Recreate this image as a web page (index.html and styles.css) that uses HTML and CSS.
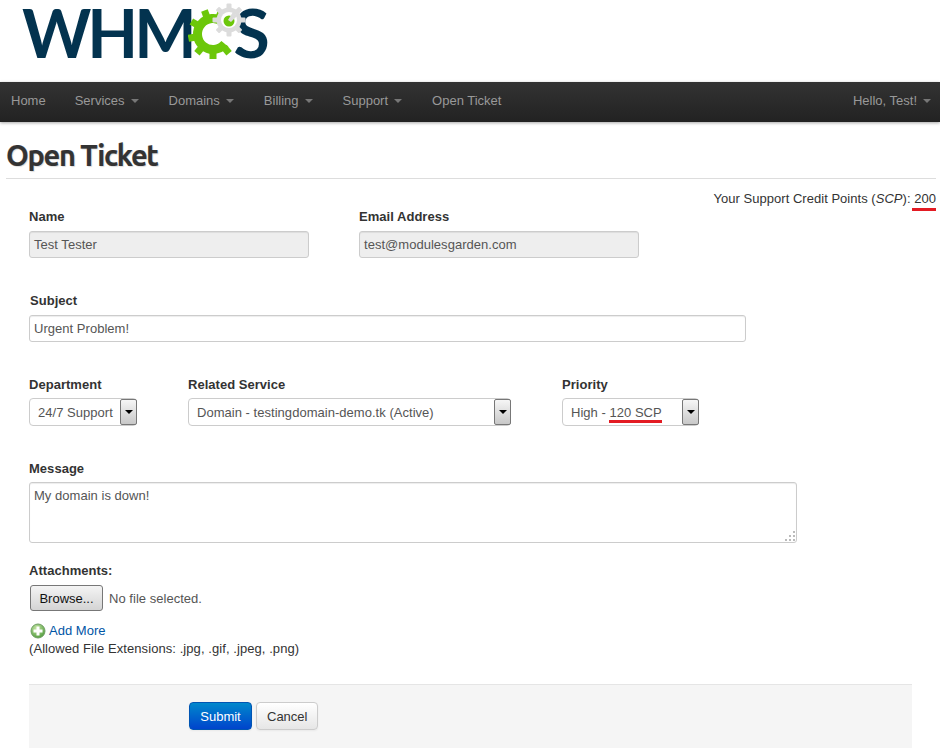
FILE: index.html
```html
<!DOCTYPE html>
<html lang="en">
<head>
<meta charset="utf-8">
<title>Open Ticket</title>
<link rel="stylesheet" href="styles.css">
</head>
<body>
<header class="brand">
  <div class="logo">
    <span class="logo-text">WHM</span>
    <svg class="gears" width="58" height="58" viewBox="0 0 58 58" aria-hidden="true">
      <g fill="#6cc70a">
        <circle cx="25" cy="32" r="15.500" fill="none" stroke="#6cc70a" stroke-width="9" stroke-dasharray="73 25" transform="rotate(40 25 32)"/>
        <rect x="21.500" y="7" width="7" height="8" transform="rotate(-20 25 32)"/>
        <rect x="21.500" y="7" width="7" height="8" transform="rotate(20 25 32)"/>
        <rect x="21.500" y="7" width="7" height="8" transform="rotate(-60 25 32)"/>
        <rect x="21.500" y="7" width="7" height="8" transform="rotate(-100 25 32)"/>
        <rect x="21.500" y="7" width="7" height="8" transform="rotate(-140 25 32)"/>
        <rect x="21.500" y="7" width="7" height="8" transform="rotate(180 25 32)"/>
        <rect x="21.500" y="7" width="7" height="8" transform="rotate(140 25 32)"/>
      </g>
      <g fill="#dcdcdc">
        <circle cx="41" cy="18" r="12.500"/>
        <rect x="38.500" y="1.500" width="5" height="33" rx="1"/>
        <rect x="38.500" y="1.500" width="5" height="33" rx="1" transform="rotate(45 41 18)"/>
        <rect x="38.500" y="1.500" width="5" height="33" rx="1" transform="rotate(90 41 18)"/>
        <rect x="38.500" y="1.500" width="5" height="33" rx="1" transform="rotate(135 41 18)"/>
      </g>
      <circle cx="41" cy="18" r="8" fill="#fff"/>
      <circle cx="41" cy="19" r="5.500" fill="#6cc70a"/>
      <path d="M40 18l5-8 4 4-6 6z" fill="#dcdcdc"/>
    </svg>
    <span class="logo-text logo-s">S</span>
  </div>
</header>

<nav class="navbar">
  <ul class="nav">
    <li class="nav-item">Home</li>
    <li class="nav-item">Services<i class="caret"></i></li>
    <li class="nav-item">Domains<i class="caret"></i></li>
    <li class="nav-item">Billing<i class="caret"></i></li>
    <li class="nav-item">Support<i class="caret"></i></li>
    <li class="nav-item">Open Ticket</li>
  </ul>
  <div class="nav-item nav-user">Hello, Test!<i class="caret"></i></div>
</nav>

<main class="page">
  <h1 class="title">Open Ticket</h1>
  <p class="credits">Your Support Credit Points (<em>SCP</em>): <span class="mark">200</span></p>

  <form class="form">
    <div class="row row-contact">
      <div class="field field-name">
        <div class="label">Name</div>
        <div class="control control-ro">Test Tester</div>
      </div>
      <div class="field field-name">
        <div class="label">Email Address</div>
        <div class="control control-ro">test@modulesgarden.com</div>
      </div>
    </div>

    <div class="row row-subject">
      <div class="field field-subject">
        <div class="label label-shift">Subject</div>
        <div class="control">Urgent Problem!</div>
      </div>
    </div>

    <div class="row row-selects">
      <div class="field field-dept">
        <div class="label">Department</div>
        <div class="select"><span class="select-value">24/7 Support</span><span class="select-btn"><i class="select-arrow"></i></span></div>
      </div>
      <div class="field field-service">
        <div class="label">Related Service</div>
        <div class="select"><span class="select-value">Domain - testingdomain-demo.tk (Active)</span><span class="select-btn"><i class="select-arrow"></i></span></div>
      </div>
      <div class="field field-priority">
        <div class="label">Priority</div>
        <div class="select"><span class="select-value">High - <span class="mark-2">120 SCP</span></span><span class="select-btn"><i class="select-arrow"></i></span></div>
      </div>
    </div>

    <div class="row row-message">
      <div class="field field-message">
        <div class="label">Message</div>
        <div class="textarea">My domain is down!
          <svg class="grip" width="12" height="12" viewBox="0 0 12 12" aria-hidden="true">
            <g fill="#bbb">
              <rect x="9" y="1" width="2" height="2"/>
              <rect x="5" y="5" width="2" height="2"/><rect x="9" y="5" width="2" height="2"/>
              <rect x="1" y="9" width="2" height="2"/><rect x="5" y="9" width="2" height="2"/><rect x="9" y="9" width="2" height="2"/>
            </g>
          </svg>
        </div>
      </div>
    </div>

    <div class="attachments">
      <div class="label">Attachments:</div>
      <div class="file-row">
        <button type="button" class="browse">Browse...</button>
        <span class="file-status">No file selected.</span>
      </div>
      <div class="add-more">
        <svg class="add-icon" width="16" height="16" viewBox="0 0 16 16" aria-hidden="true">
          <defs>
            <radialGradient id="addG" cx="40%" cy="30%" r="75%"><stop offset="0" stop-color="#c6e6a6"/><stop offset="1" stop-color="#4f9a3a"/></radialGradient>
          </defs>
          <circle cx="8" cy="8" r="7" fill="url(#addG)" stroke="#6f9f63"/>
          <path d="M6.500 3.500h3v3h3v3h-3v3h-3v-3h-3v-3h3z" fill="#fff"/>
        </svg>
        <a class="add-link">Add More</a>
      </div>
      <div class="extensions">(Allowed File Extensions: .jpg, .gif, .jpeg, .png)</div>
    </div>

    <div class="actions">
      <button type="button" class="btn btn-primary">Submit</button>
      <button type="button" class="btn">Cancel</button>
    </div>
  </form>
</main>
</body>
</html>
```
FILE: styles.css
```css
* { box-sizing: border-box; }
html, body { margin: 0; padding: 0; }
body {
  width: 940px;
  height: 748px;
  overflow: hidden;
  background: #fff;
  color: #333;
  font: 13px/20px "Liberation Sans", Arial, sans-serif;
  letter-spacing: .03px;
}

/* logo */
.brand { height: 82px; padding: 0 0 0 22px; }
.logo { display: flex; align-items: flex-start; height: 82px; }
.logo-text {
  font: 700 66px/80px "Lato", sans-serif;
  color: #03334f;
  letter-spacing: -4px;
  margin-top: -7px;
}
.gears { margin: 2px 0 0 -5px; flex: none; z-index: 1; }
.logo-s { margin-left: -12px; letter-spacing: 0; }

/* navbar */
.navbar {
  display: flex;
  justify-content: space-between;
  height: 40px;
  background: linear-gradient(#333, #222);
  box-shadow: 0 1px 3px rgba(0,0,0,.35);
  letter-spacing: 0;
}
.nav { display: flex; list-style: none; margin: 0; padding: 0; }
.nav-item { padding: 9px 15px 11px; color: #999; line-height: 20px; white-space: nowrap; }
.nav > .nav-item:first-child { padding-left: 11px; padding-right: 14px; }
.nav-user { padding-right: 9px; }
.caret {
  display: inline-block;
  width: 0; height: 0;
  margin-left: 6px;
  vertical-align: 2px;
  border: 4px solid transparent;
  border-top-color: #777;
  border-bottom: 0;
}

/* page */
.page { padding: 0 4px 0 6px; }
.title {
  margin: 0;
  height: 57px;
  padding-top: 13px;
  border-bottom: 1px solid #ddd;
  font: 700 29px/40px "Ubuntu", "Open Sans", sans-serif;
  letter-spacing: -1.300px;
  color: #333;
  -webkit-text-stroke: .2px #333;
  text-shadow: 1px 1px 1px #ddd;
}
.credits { margin: 9px 0 0; padding-top: 1px; text-align: right; line-height: 20px; height: 20px; }
.mark { display: inline-block; height: 22px; margin-left: -2px; padding-left: 2px; border-bottom: 3px solid #e31b23; }
.mark-2 { display: inline-block; height: 23px; margin-left: -1px; padding-left: 1px; border-bottom: 3px solid #e31b23; }

.form { padding: 0 0 0 23px; }
.row { display: flex; }
.row-contact { height: 69px; margin-top: -2px; gap: 50px; }
.row-subject { margin-top: 15px; height: 62px; }
.row-selects { margin-top: 22px; height: 62px; }
.row-message { margin-top: 22px; }
.label { font-weight: 700; padding-top: 1px; line-height: 20px; height: 20px; color: #333; }
.label-shift { padding-left: 1px; }

.field-name { width: 280px; }
.field-subject { width: 717px; }
.field-dept { width: 108px; margin-right: 51px; }
.field-service { width: 323px; margin-right: 51px; }
.field-priority { width: 137px; }
.field-message { width: 768px; }

.control {
  height: 27px;
  margin-top: 5px;
  padding: 0 4px;
  line-height: 25px;
  color: #555;
  background: #fff;
  border: 1px solid #ccc;
  border-radius: 3px;
  box-shadow: inset 0 1px 1px rgba(0,0,0,.075);
}
.control-ro { background: #eee; }

.select {
  display: flex;
  justify-content: space-between;
  height: 28px;
  margin-top: 4px;
  color: #555;
  background: #fff;
  border: 1px solid #ccc;
  border-radius: 4px;
}
.select-value { padding: 1px 0 0 8px; line-height: 26px; white-space: nowrap; }
.select-btn {
  display: flex;
  align-items: center;
  justify-content: center;
  flex: none;
  width: 17px;
  height: 26px;
  margin-right: -1px;
  border: 1px solid #777;
  border-radius: 2px;
  background: linear-gradient(#f6f6f6, #c8c8c8);
}
.select-arrow {
  width: 0; height: 0;
  border: 4px solid transparent;
  border-top-color: #000;
  border-bottom: 0;
}

.textarea {
  position: relative;
  height: 61px;
  margin-top: 4px;
  padding: 3px 4px;
  color: #555;
  border: 1px solid #ccc;
  border-radius: 3px;
  box-shadow: inset 0 1px 1px rgba(0,0,0,.075);
}
.grip { position: absolute; right: 0; bottom: 0; }

.attachments { margin-top: 17px; }
.file-row { display: flex; align-items: center; height: 26px; margin-top: 5px; padding-left: 1px; }
.browse {
  width: 73px;
  height: 26px;
  padding: 0;
  font: 13px "Liberation Sans", Arial, sans-serif;
  color: #111;
  border: 1px solid #777;
  border-radius: 3px;
  background: linear-gradient(#f4f4f4, #d4d4d4);
}
.file-status { margin-left: 6px; padding-top: 1px; color: #555; }
.add-more { display: flex; align-items: center; height: 18px; margin-top: 10px; padding-top: 1px; }
.add-icon { margin: 0 3px 0 1px; flex: none; }
.add-link { color: #0055a5; }
.extensions { height: 18px; padding-top: 1px; line-height: 18px; letter-spacing: .07px; }

.actions {
  display: flex;
  gap: 4px;
  width: 883px;
  height: 64px;
  margin-top: 27px;
  padding: 17px 0 0 160px;
  background: #f5f5f5;
  border-top: 1px solid #e5e5e5;
}
.btn {
  height: 28px;
  padding: 0 10px;
  font: 13px "Liberation Sans", Arial, sans-serif;
  color: #333;
  border: 1px solid #ccc;
  border-radius: 4px;
  background: linear-gradient(#fff, #e6e6e6);
  box-shadow: 0 1px 2px rgba(0,0,0,.05);
}
.btn-primary {
  width: 63px;
  color: #fff;
  border-color: #0055b3;
  background: linear-gradient(#0088cc, #0044cc);
}
```
